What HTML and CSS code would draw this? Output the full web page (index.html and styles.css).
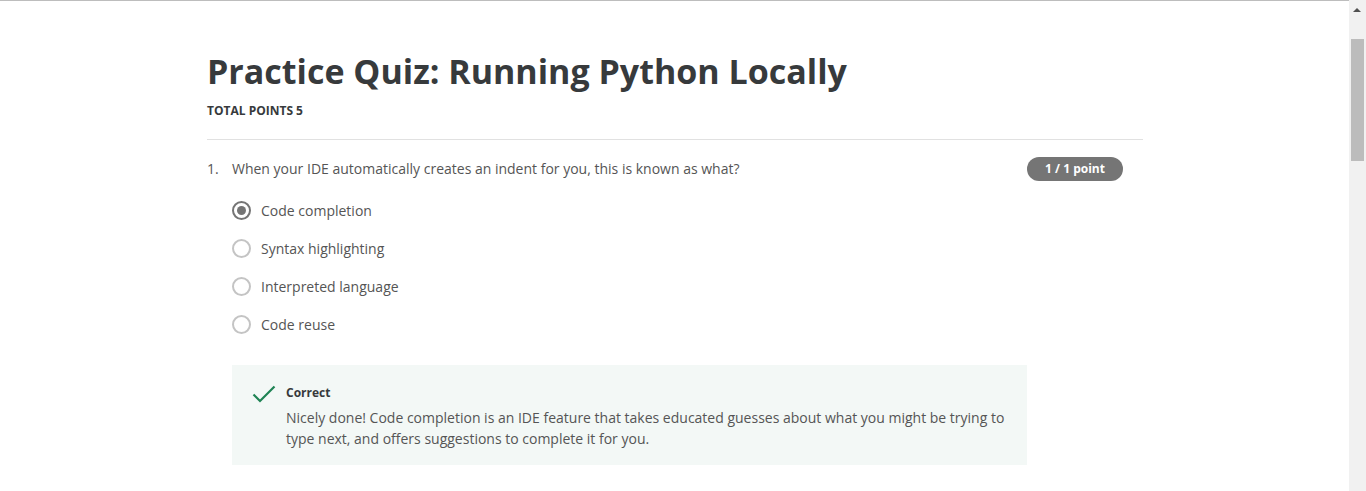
FILE: index.html
```html
<!DOCTYPE html>
<html lang="en">
<head>
<meta charset="utf-8">
<title>Practice Quiz: Running Python Locally</title>
<link rel="stylesheet" href="styles.css">
</head>
<body>
<div class="page">
  <main class="quiz">
    <header class="quiz-head">
      <h1 class="quiz-title">Practice Quiz: Running Python Locally</h1>
      <div class="quiz-points">TOTAL POINTS 5</div>
    </header>
    <section class="question">
      <div class="q-row">
        <span class="q-num">1.</span>
        <span class="q-text">When your IDE automatically creates an indent for you, this is known as what?</span>
        <span class="q-badge">1 / 1 point</span>
      </div>
      <ul class="options">
        <li class="option"><span class="radio checked"></span><span class="opt-label">Code completion</span></li>
        <li class="option"><span class="radio"></span><span class="opt-label">Syntax highlighting</span></li>
        <li class="option"><span class="radio"></span><span class="opt-label">Interpreted language</span></li>
        <li class="option"><span class="radio"></span><span class="opt-label">Code reuse</span></li>
      </ul>
      <div class="feedback">
        <svg class="check" width="24" height="18" viewBox="0 0 24 18"><path d="M1.5 9.5 L8 16 L22.5 1.5" fill="none" stroke="#1f8354" stroke-width="2.2"/></svg>
        <div class="fb-body">
          <div class="fb-title">Correct</div>
          <p class="fb-text">Nicely done! Code completion is an IDE feature that takes educated guesses about what you might be trying to type next, and offers suggestions to complete it for you.</p>
        </div>
      </div>
    </section>
  </main>
  <div class="scrollbar"><span class="sb-arrow"></span><span class="sb-thumb"></span></div>
</div>
</body>
</html>
```
FILE: styles.css
```css
html, body { margin: 0; padding: 0; height: 100%; overflow: hidden; }
body {
  font-family: "Open Sans", "Liberation Sans", sans-serif;
  color: #373a3c;
  background: #fff;
}
.page {
  position: relative;
  height: 491px;
  border-top: 1px solid #bdbdbd;
  box-sizing: border-box;
}
.quiz {
  width: 936px;
  margin-left: 207px;
  padding-top: 46px;
}
.quiz-title {
  margin: 0;
  font-size: 34px;
  line-height: 48px;
  font-weight: 700;
  color: #373a3c;
  letter-spacing: 0;
}
.quiz-points {
  margin-top: 8px;
  font-size: 12px;
  line-height: 16px;
  font-weight: 700;
  color: #373a3c;
}
.quiz-head {
  padding-bottom: 20px;
  border-bottom: 1px solid #e1e1e1;
}
.question { padding-top: 17px; }
.q-row {
  display: flex;
  align-items: flex-start;
  font-size: 14px;
  line-height: 24px;
  color: #555;
  padding-right: 20px;
}
.q-num { width: 25px; }
.q-text { flex: 1; }
.q-badge {
  background: #757575;
  color: #fff;
  font-size: 12px;
  font-weight: 700;
  line-height: 24px;
  height: 24px;
  width: 96px;
  text-align: center;
  border-radius: 12px;
}
.options {
  list-style: none;
  margin: 10px 0 0 25px;
  padding: 0;
}
.option {
  display: flex;
  align-items: center;
  height: 38px;
  font-size: 14px;
  color: #555;
}
.radio {
  width: 19px;
  height: 19px;
  box-sizing: border-box;
  border: 2px solid #c4c4c4;
  border-radius: 50%;
  margin-right: 10px;
  display: flex;
  align-items: center;
  justify-content: center;
}
.radio.checked { border-color: #757575; }
.radio.checked::after {
  content: "";
  width: 9px;
  height: 9px;
  border-radius: 50%;
  background: #757575;
}
.feedback {
  margin: 22px 0 0 25px;
  width: 795px;
  box-sizing: border-box;
  background: #f3f8f6;
  display: flex;
  padding: 19px 20px 16px 20px;
}
.check { margin-top: 1px; margin-right: 10px; flex: none; }
.fb-title {
  font-size: 12px;
  font-weight: 700;
  line-height: 18px;
  color: #373a3c;
}
.fb-text {
  margin: 5px 0 0;
  font-size: 14px;
  line-height: 21px;
  color: #555;
}
.scrollbar {
  position: absolute;
  top: -1px;
  right: 0;
  width: 17px;
  height: 491px;
  background: #f1f1f1;
}
.sb-arrow {
  position: absolute;
  left: 4px;
  top: 8px;
  width: 0;
  height: 0;
  border-left: 4px solid transparent;
  border-right: 4px solid transparent;
  border-bottom: 4px solid #505050;
}
.sb-thumb {
  position: absolute;
  left: 2px;
  top: 39px;
  width: 13px;
  height: 122px;
  background: #bcbcbc;
}
```
